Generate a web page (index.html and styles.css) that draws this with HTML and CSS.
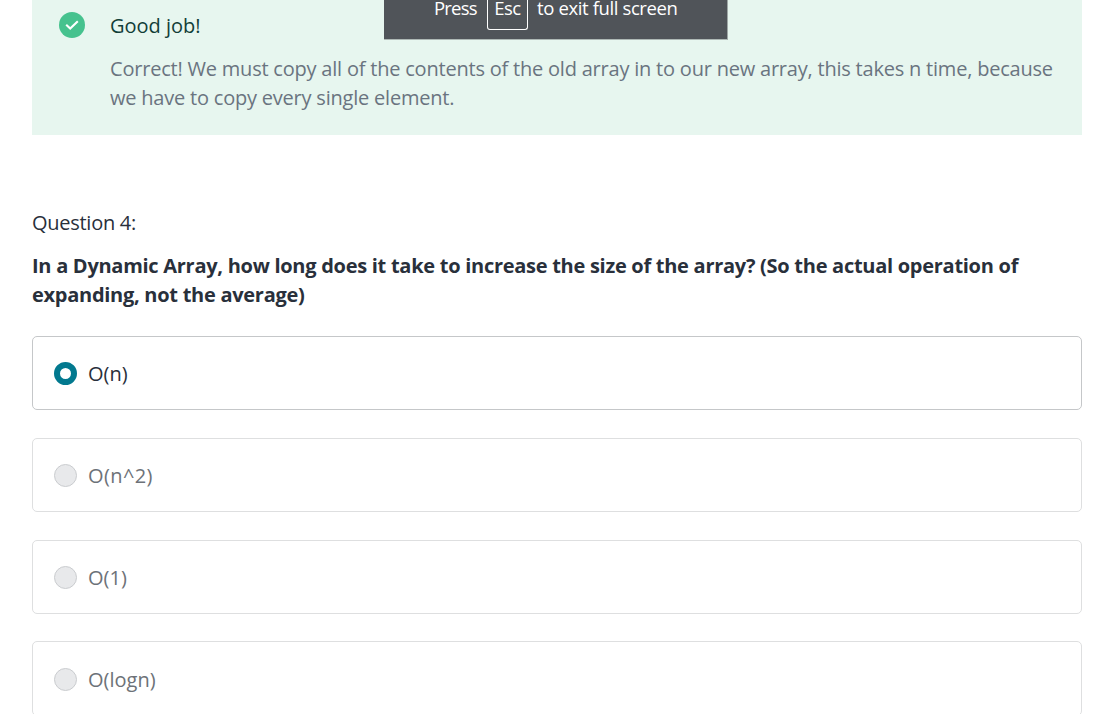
FILE: index.html
```
<!DOCTYPE html>
<html lang="en">

<head>
    <meta charset="UTF-8">
    <meta name="viewport" content="width=device-width, initial-scale=1.0">
    <title>Quiz</title>
    <link rel="stylesheet" href="styles.css">
</head>

<body>
    <div class="fullscreen-hint">
        <span class="press">Press</span>
        <kbd>Esc</kbd>
        <span class="exit">to exit full screen</span>
    </div>
    <main class="quiz">
        <section class="feedback">
            <svg class="check" viewBox="0 0 26 26">
                <circle cx="13" cy="13" r="13" fill="#46c28e" />
                <path d="M7.2 12.8l4 3.8 7.6-7.4" fill="none" stroke="#fff" stroke-width="2.1" />
            </svg>
            <div class="feedback-body">
                <p class="feedback-title">Good job!</p>
                <p class="feedback-text">
                    Correct! We must copy all of the contents of the old array in to our new array, this takes n time, because<br>
                    we have to copy every single element.
                </p>
            </div>
        </section>
        <section class="question">
            <p class="number">Question 4:</p>
            <h2>
                In a Dynamic Array, how long does it take to increase the size of the array? (So the actual operation of<br>
                expanding, not the average)
            </h2>
            <div class="options">
                <label class="option selected"><input type="radio" name="q4" checked><span>O(n)</span></label>
                <label class="option"><input type="radio" name="q4" disabled><span class="wide">O(n^2)</span></label>
                <label class="option"><input type="radio" name="q4" disabled><span>O(1)</span></label>
                <label class="option"><input type="radio" name="q4" disabled><span>O(logn)</span></label>
            </div>
        </section>
    </main>
</body>

</html>
```
FILE: styles.css
```
body {
    margin: 0;
    height: 714px;
    overflow: hidden;
    background: #fff;
    color: #29303b;
    font-family: 'Segoe UI', 'Open Sans', sans-serif;
    font-size: 20px;
    line-height: 29px;
}

p,
h2 {
    margin: 0;
}

.quiz {
    width: 1050px;
    margin-left: 32px;
}

/* browser message hanging from the top edge */
.fullscreen-hint {
    position: absolute;
    top: 0;
    left: 384px;
    width: 344px;
    height: 40px;
    box-sizing: border-box;
    padding-left: 50px;
    display: flex;
    background: #505459;
    border-right: 1px solid #9fa8a6;
    border-bottom: 1px solid #aeb8b5;
    color: #fff;
    font-size: 18.5px;
    line-height: 15px;
    white-space: nowrap;
}

.press {
    width: 43px;
    letter-spacing: -0.8px;
}

.exit {
    letter-spacing: -0.38px;
}

.fullscreen-hint kbd {
    width: 41px;
    height: 30px;
    margin: 0 9px 0 10px;
    box-sizing: border-box;
    border: 1px solid #fff;
    border-top: 0;
    border-radius: 0 0 3px 3px;
    font: inherit;
    letter-spacing: -0.5px;
    text-align: center;
}

.feedback {
    height: 135px;
    box-sizing: border-box;
    padding: 11px 0 0 27px;
    display: flex;
    background: #e7f6ef;
    white-space: nowrap;
}

.check {
    flex: none;
    width: 26px;
    height: 26px;
    margin: 1px 25px 0 0;
}

.feedback-title {
    margin-bottom: 14px;
    color: #123e38;
}

.feedback-text {
    color: #6a7480;
    letter-spacing: -0.21px;
}

.question {
    padding-top: 73px;
    white-space: nowrap;
}

.number {
    letter-spacing: -0.27px;
}

.question h2 {
    margin: 14px 0 27px;
    font-size: 20px;
    font-weight: 700;
    letter-spacing: -0.275px;
}

.options {
    display: grid;
    gap: 28px;
}

.option {
    height: 74px;
    box-sizing: border-box;
    padding-left: 21px;
    display: flex;
    align-items: center;
    border: 1px solid #dedfe0;
    border-radius: 5px;
    color: #6d7278;
}

.option:last-child {
    height: 75px;
    margin-top: -1px;
    padding-top: 1px;
}

.option.selected {
    border-color: #c5c7c9;
    color: #29303b;
}

.option input {
    appearance: none;
    width: 23px;
    height: 23px;
    margin: 0 11px 0 0;
    box-sizing: border-box;
    border: 1px solid #cacccf;
    border-radius: 50%;
    background: #e8e9eb;
}

.option input:checked {
    border: 6px solid #02798f;
    background: #fff;
}

.option .wide {
    letter-spacing: 0.4px;
}
```
